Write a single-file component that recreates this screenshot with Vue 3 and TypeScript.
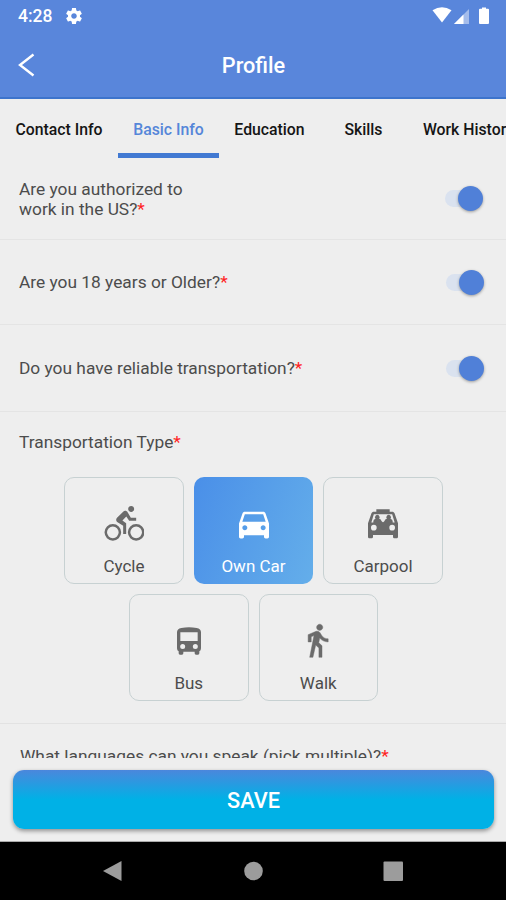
<script setup lang="ts">
import { ref } from 'vue'

interface Question {
  text: string[]
  on: boolean
}

const tabs: string[] = ['Contact Info', 'Basic Info', 'Education', 'Skills', 'Work History']
const activeTab = ref('Basic Info')

const questions = ref<Question[]>([
  { text: ['Are you authorized to', 'work in the US?'], on: true },
  { text: ['Are you 18 years or Older?'], on: true },
  { text: ['Do you have reliable transportation?'], on: true },
])

const transportRows: string[][] = [
  ['Cycle', 'Own Car', 'Carpool'],
  ['Bus', 'Walk'],
]
const transport = ref('Own Car')
</script>

<template>
  <div class="screen">
    <header class="header">
      <div class="status">
        <span class="clock">4:28</span>
        <svg class="gear" viewBox="2 2 20 20"><path fill-rule="evenodd" d="M19.43 12.98c.04-.32.07-.64.07-.98s-.03-.66-.07-.98l2.11-1.65c.19-.15.24-.42.12-.64l-2-3.46c-.12-.22-.39-.3-.61-.22l-2.49 1c-.52-.4-1.08-.73-1.69-.98l-.38-2.65C14.46 2.18 14.25 2 14 2h-4c-.25 0-.46.18-.49.42l-.38 2.65c-.61.25-1.17.59-1.69.98l-2.49-1c-.23-.09-.49 0-.61.22l-2 3.46c-.13.22-.07.49.12.64l2.11 1.65c-.04.32-.07.65-.07.98s.03.66.07.98l-2.11 1.65c-.19.15-.24.42-.12.64l2 3.46c.12.22.39.3.61.22l2.49-1c.52.4 1.08.73 1.69.98l.38 2.65c.03.24.24.42.49.42h4c.25 0 .46-.18.49-.42l.38-2.65c.61-.25 1.17-.59 1.69-.98l2.49 1c.23.09.49 0 .61-.22l2-3.46c.12-.22.07-.49-.12-.64l-2.11-1.65zM12 15.5c-1.93 0-3.5-1.57-3.5-3.5s1.57-3.5 3.5-3.5 3.5 1.57 3.5 3.5-1.57 3.5-3.5 3.5z" /></svg>
        <svg class="signals" viewBox="0 0 58 18">
          <path d="M0.5 3.2Q10 -2.6 19.5 3.2L10 15.5Z" />
          <path d="M37 2V17H22Z" opacity=".45" />
          <path d="M31.5 7.5V17H22Z" />
          <path d="M48 1.8h2V.5h4v1.3h2q1 0 1 1V16q0 1-1 1h-8q-1 0-1-1V2.8q0-1 1-1Z" />
        </svg>
      </div>
      <div class="titlebar">
        <svg class="back" viewBox="0 0 18 24"><path d="M15.500 1.500 2 12l13.500 10.500" /></svg>
        <h1>Profile</h1>
      </div>
    </header>

    <nav class="tabs">
      <button v-for="tab in tabs" :key="tab" class="tab" :class="{ active: tab === activeTab }" @click="activeTab = tab">
        {{ tab }}
      </button>
    </nav>

    <main class="content">
      <section v-for="q in questions" :key="q.text[0]" class="question">
        <p><span v-for="(line, i) in q.text" :key="line" class="line">{{ line }}<b v-if="i === q.text.length - 1">*</b></span></p>
        <button class="switch" :class="{ on: q.on }" @click="q.on = !q.on"><i /></button>
      </section>

      <section class="transport">
        <p>Transportation Type<b>*</b></p>
        <div v-for="(row, r) in transportRows" :key="r" class="cards">
          <button v-for="name in row" :key="name" class="card" :class="{ selected: name === transport }" @click="transport = name">
            <svg v-if="name === 'Cycle'" viewBox="-.3 0 24 24"><path d="M5 20.500A3.500 3.500 0 0 1 1.500 17 3.500 3.500 0 0 1 5 13.500 3.500 3.500 0 0 1 8.500 17 3.500 3.500 0 0 1 5 20.500M5 12a5 5 0 1 0 0 10 5 5 0 0 0 0-10m9.800-2H19V8.200h-3.200l-1.940-3.270c-.29-.5-.86-.83-1.460-.83-.47 0-.9.190-1.200.5L7.500 8.290C7.190 8.600 7 9 7 9.500c0 .63.33 1.160.85 1.470L11.200 13v5H13v-6.500l-2.250-1.650 2.320-2.350M19 20.500a3.500 3.500 0 1 1 0-7 3.500 3.500 0 0 1 0 7m0-8.500a5 5 0 1 0 0 10 5 5 0 0 0 0-10m-3-7.200c1 0 1.800-.8 1.800-1.800S17 1.200 16 1.200s-1.800.8-1.800 1.800S15 4.800 16 4.800Z" /></svg>
            <svg v-else-if="name === 'Own Car'" viewBox="0 .3 24 24"><path d="M18.920 6.010C18.720 5.420 18.160 5 17.500 5h-11c-.66 0-1.210.42-1.420 1.010L3 12v8c0 .55.45 1 1 1h1c.55 0 1-.45 1-1v-1h12v1c0 .55.45 1 1 1h1c.55 0 1-.45 1-1v-8l-2.080-5.990zM6.500 16c-.83 0-1.500-.67-1.500-1.500S5.670 13 6.500 13s1.500.67 1.500 1.500S7.330 16 6.500 16zm11 0c-.83 0-1.500-.67-1.500-1.500s.67-1.500 1.500-1.500 1.500.67 1.500 1.500-.67 1.500-1.500 1.500zM5 11l1.500-4.500h11L19 11H5z" /></svg>
            <svg v-else-if="name === 'Carpool'" viewBox="0 .4 24 24">
              <path d="M18.920 6.010C18.720 5.420 18.160 5 17.500 5H16V3.600H8V5H6.500c-.66 0-1.210.42-1.420 1.010L3 12v8c0 .55.45 1 1 1h1c.55 0 1-.45 1-1v-1h12v1c0 .55.45 1 1 1h1c.55 0 1-.45 1-1v-8l-2.080-5.990zM6.500 16.300a1.700 1.700 0 1 1 0-3.400 1.700 1.700 0 0 1 0 3.400zm11 0a1.700 1.700 0 1 1 0-3.400 1.700 1.700 0 0 1 0 3.400zM5 11.500l1.500-5h11l1.500 5H5z" />
              <path d="M6.200 12v-1.300q0-1 1.300-1.400a1.400 1.500 0 1 1 2.200 0q1.200.3 1.400 1.300l.9.900.9-.9q.2-1 1.400-1.300a1.400 1.500 0 1 1 2.200 0q1.300.4 1.300 1.400V12Z" />
            </svg>
            <svg v-else-if="name === 'Bus'" viewBox="0 0 120 120"><path fill-rule="evenodd" d="M24 34Q24 23 37 21 60 17 83 21 96 23 96 34V82Q96 89 91 91V97Q91 101 87 101H81Q77 101 77 97V92H43V97Q43 101 39 101H33Q29 101 29 97V91Q24 89 24 82ZM34 34V60H86V34ZM41 69a7.500 7.500 0 1 0 0 15 7.500 7.500 0 0 0 0-15ZM79 69a7.500 7.500 0 1 0 0 15 7.500 7.500 0 0 0 0-15Z" /></svg>
            <svg v-else viewBox="-.6 -.6 26 26"><path stroke="#6b6b6b" stroke-width=".3" d="M13.500 5.500c1.100 0 2-.9 2-2s-.9-2-2-2-2 .9-2 2 .9 2 2 2zM9.800 8.900 7 23h2.100l1.800-8 2.100 2v6h2v-7.500l-2.100-2 .6-3C14.800 12 16.800 13 19 13v-2c-1.900 0-3.500-1-4.300-2.400l-1-1.600c-.4-.6-1-1-1.700-1-.3 0-.5.1-.8.1L6 8.300V13h2V9.600l1.800-.7" /></svg>
            <span>{{ name }}</span>
          </button>
        </div>
      </section>

      <section class="languages"><p>What languages can you speak (pick multiple)?<b>*</b></p></section>
    </main>

    <footer class="footer"><button class="save">SAVE</button></footer>

    <div class="sysnav">
      <svg viewBox="0 0 506 58">
        <path d="M103 29 121.500 19V39Z" />
        <circle cx="253.500" cy="29" r="9.300" />
        <rect x="383.500" y="19.500" width="19.500" height="19.500" rx="1" />
      </svg>
    </div>
  </div>
</template>

<style>
body {
  margin: 0;
}
</style>

<style scoped>
.screen {
  display: flex;
  flex-direction: column;
  width: 506px;
  height: 900px;
  overflow: hidden;
  background: #eee;
  color: #4c4c4c;
  font-family: Roboto, sans-serif;
}
button {
  margin: 0;
  padding: 0;
  border: 0;
  background: none;
  font-family: inherit;
}
p,
h1 {
  margin: 0;
}
svg {
  display: block;
}
.header {
  box-sizing: border-box;
  flex: none;
  height: 99px;
  border-bottom: 2px solid #3d74cc;
  background: #5986db;
  color: #fff;
}
.status {
  display: flex;
  align-items: center;
  height: 32px;
  padding: 0 16px 0 18px;
  fill: #fff;
}
.clock {
  width: 48px;
  font-size: 17.500px;
  font-weight: 500;
}
.gear {
  width: 16px;
  height: 16px;
}
.signals {
  width: 58px;
  height: 18px;
  margin-left: auto;
}
.titlebar {
  display: grid;
  grid-template-columns: 18px 1fr 18px;
  align-items: center;
  height: 66px;
  padding: 0 18px;
}
.back {
  width: 18px;
  height: 24px;
  fill: none;
  stroke: #fff;
  stroke-width: 2.400;
}
h1 {
  padding-left: 1px;
  font-size: 21.700px;
  font-weight: 500;
  text-align: center;
}
.tabs {
  display: flex;
  flex: none;
  height: 59px;
}
.tab {
  box-sizing: border-box;
  flex: none;
  width: 101px;
  border-bottom: 5px solid transparent;
  padding-top: 6px;
  color: #151515;
  font-size: 15.800px;
  font-weight: 500;
  white-space: nowrap;
}
.tab:first-child {
  width: 118px;
}
.tab:nth-child(4) {
  width: 87px;
}
.tab:last-child {
  width: 123px;
}
.tab.active {
  border-color: #4179d2;
  color: #5586d9;
}
.content {
  flex: none;
  height: 600px;
  overflow: hidden;
  font-size: 17.330px;
  line-height: 20px;
}
b {
  color: #f22;
  font-weight: 400;
}
.question {
  box-sizing: border-box;
  display: flex;
  align-items: center;
  justify-content: space-between;
  height: 85px;
  padding: 0 22px 0 19px;
  border-bottom: 1px solid #e4e4e4;
}
.question:first-child {
  height: 82px;
  padding-right: 23px;
}
.question:nth-child(3) {
  height: 87px;
}
.line {
  display: block;
}
.switch {
  display: flex;
  align-items: center;
  width: 38px;
  height: 17px;
  border-radius: 9px;
  background: linear-gradient(90deg, #dae2ef 0 30px, transparent 30px);
}
.switch i {
  width: 25px;
  height: 25px;
  border-radius: 50%;
  background: #5080d8;
  box-shadow: 0 1px 3px rgba(0, 0, 0, 0.35);
}
.switch.on i {
  margin-left: auto;
}
.transport {
  box-sizing: border-box;
  height: 312px;
  padding-top: 20px;
  border-bottom: 1px solid #e2e2e2;
}
.transport p,
.languages p {
  padding-left: 19px;
}
.cards {
  display: flex;
  justify-content: center;
  gap: 10px;
  margin-top: 10px;
  padding-left: 1px;
}
p + .cards {
  margin-top: 25px;
}
.card {
  box-sizing: border-box;
  display: flex;
  flex-direction: column;
  align-items: center;
  width: 119.500px;
  height: 107px;
  padding-top: 26px;
  border: 1px solid #c7d1d2;
  border-radius: 10px;
  color: #4c4c4c;
  font-size: 17px;
  line-height: 20px;
  fill: #6b6b6b;
}
.card svg {
  width: 40px;
  height: 40px;
}
.card span {
  margin-top: 12px;
}
.card.selected {
  border-color: transparent;
  background: linear-gradient(110deg, #4a8fe8, #64aeea) border-box;
  color: #fff;
  fill: #fff;
}
.languages {
  padding: 22px 0 0 1px;
}
.footer {
  box-sizing: border-box;
  flex: none;
  height: 84px;
  padding: 12px 12px 0 13px;
  border-bottom: 1px solid #aaa;
}
.save {
  width: 100%;
  height: 59px;
  padding-top: 2px;
  border-radius: 11px;
  background: linear-gradient(#4b87dc, #00b1e6 50%);
  box-shadow: 0 2px 4px rgba(0, 0, 0, 0.4);
  color: #fff;
  font-size: 21.700px;
  font-weight: 500;
}
.sysnav {
  flex: 1;
  background: #000;
  fill: #9c9c9c;
}
</style>
